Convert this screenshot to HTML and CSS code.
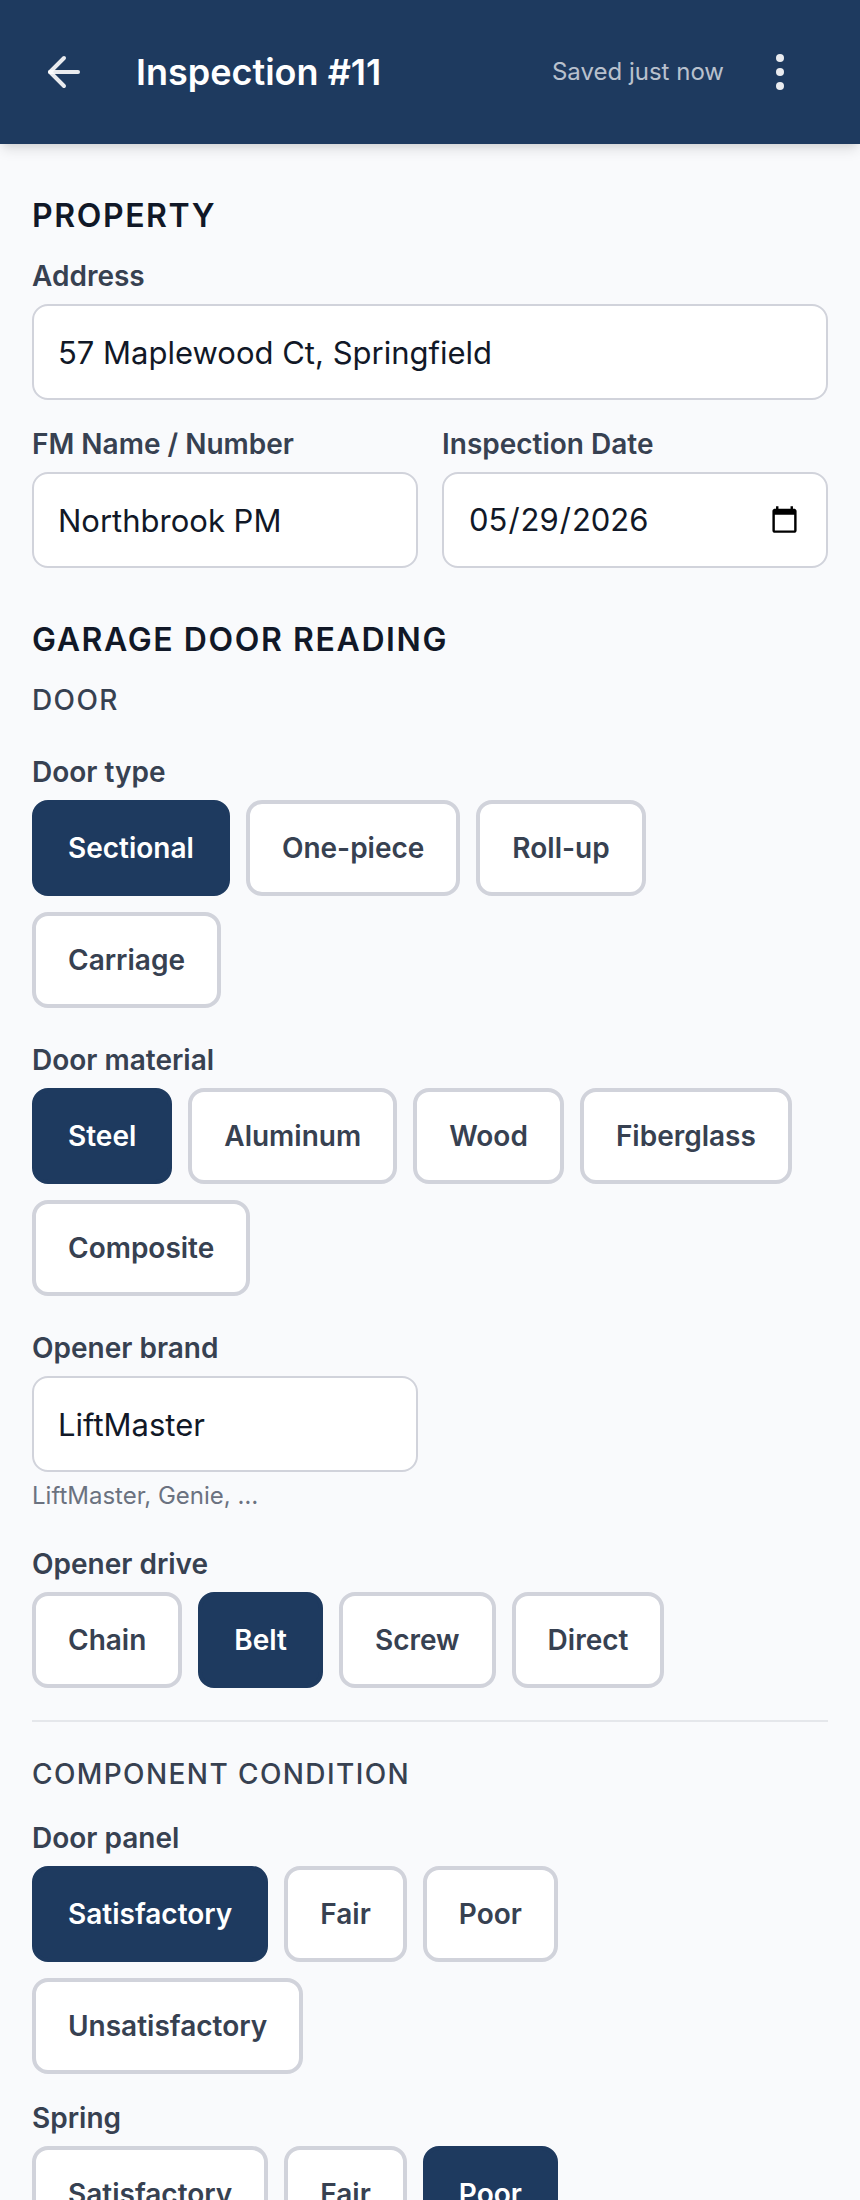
FILE: index.html
```
<!DOCTYPE html>
<html lang="en">
<head>
    <meta charset="utf-8">
    <meta name="viewport" content="width=device-width, initial-scale=1">
    <title>Inspection #11</title>
    <link rel="stylesheet" href="styles.css">
</head>
<body>
    <header class="topbar">
        <button type="button" class="icon-btn" aria-label="Back">
            <svg viewBox="0 0 24 24" fill="none" stroke="currentColor" stroke-width="2" stroke-linecap="round" stroke-linejoin="round">
                <path d="M12 19l-7-7 7-7"/>
                <path d="M19 12H5"/>
            </svg>
        </button>
        <h1>Inspection #11</h1>
        <span class="save-status">Saved just now</span>
        <button type="button" class="icon-btn" aria-label="More options">
            <svg viewBox="0 0 24 24" fill="currentColor">
                <circle cx="12" cy="5" r="2"/>
                <circle cx="12" cy="12" r="2"/>
                <circle cx="12" cy="19" r="2"/>
            </svg>
        </button>
    </header>

    <main>
        <section class="property">
            <h2>Property</h2>
            <div class="fields">
                <div class="field">
                    <label for="address">Address</label>
                    <input type="text" id="address" value="57 Maplewood Ct, Springfield">
                </div>
                <div class="row">
                    <div class="field">
                        <label for="fm-name">FM Name / Number</label>
                        <input type="text" id="fm-name" value="Northbrook PM">
                    </div>
                    <div class="field">
                        <label for="inspection-date">Inspection Date</label>
                        <input type="date" id="inspection-date" value="2026-05-29">
                    </div>
                </div>
            </div>
        </section>

        <section class="reading">
            <h2>Garage Door Reading</h2>

            <div class="door">
                <h3>Door</h3>
                <div class="field" role="group" aria-labelledby="door-type">
                    <span class="label" id="door-type">Door type</span>
                    <div class="pills">
                        <button type="button" class="pill" aria-pressed="true">Sectional</button>
                        <button type="button" class="pill" aria-pressed="false">One-piece</button>
                        <button type="button" class="pill" aria-pressed="false">Roll-up</button>
                        <button type="button" class="pill" aria-pressed="false">Carriage</button>
                    </div>
                </div>
                <div class="field" role="group" aria-labelledby="door-material">
                    <span class="label" id="door-material">Door material</span>
                    <div class="pills">
                        <button type="button" class="pill" aria-pressed="true">Steel</button>
                        <button type="button" class="pill" aria-pressed="false">Aluminum</button>
                        <button type="button" class="pill" aria-pressed="false">Wood</button>
                        <button type="button" class="pill" aria-pressed="false">Fiberglass</button>
                        <button type="button" class="pill" aria-pressed="false">Composite</button>
                    </div>
                </div>
                <div class="row">
                    <div class="field">
                        <label for="opener-brand">Opener brand</label>
                        <input type="text" id="opener-brand" value="LiftMaster" aria-describedby="opener-hint">
                        <p class="hint" id="opener-hint">LiftMaster, Genie, …</p>
                    </div>
                </div>
                <div class="field" role="group" aria-labelledby="opener-drive">
                    <span class="label" id="opener-drive">Opener drive</span>
                    <div class="pills">
                        <button type="button" class="pill" aria-pressed="false">Chain</button>
                        <button type="button" class="pill" aria-pressed="true">Belt</button>
                        <button type="button" class="pill" aria-pressed="false">Screw</button>
                        <button type="button" class="pill" aria-pressed="false">Direct</button>
                    </div>
                </div>
            </div>

            <div class="condition">
                <h3>Component Condition</h3>
                <div class="field" role="group" aria-labelledby="door-panel">
                    <span class="label" id="door-panel">Door panel</span>
                    <div class="pills">
                        <button type="button" class="pill" aria-pressed="true">Satisfactory</button>
                        <button type="button" class="pill" aria-pressed="false">Fair</button>
                        <button type="button" class="pill" aria-pressed="false">Poor</button>
                        <button type="button" class="pill" aria-pressed="false">Unsatisfactory</button>
                    </div>
                </div>
                <div class="field" role="group" aria-labelledby="spring">
                    <span class="label" id="spring">Spring</span>
                    <div class="pills">
                        <button type="button" class="pill" aria-pressed="false">Satisfactory</button>
                        <button type="button" class="pill" aria-pressed="false">Fair</button>
                        <button type="button" class="pill" aria-pressed="true">Poor</button>
                        <button type="button" class="pill" aria-pressed="false">Unsatisfactory</button>
                    </div>
                </div>
            </div>
        </section>
    </main>

    <script>
        // one choice per group
        document.querySelectorAll('.pills').forEach(function(group) {
            group.addEventListener('click', function(e) {
                const pill = e.target.closest('.pill');
                if (!pill) return;
                group.querySelectorAll('.pill').forEach(p => p.setAttribute('aria-pressed', p === pill));
            });
        });
    </script>
</body>
</html>
```
FILE: styles.css
```
* { box-sizing: border-box; margin: 0; }
html { scrollbar-width: none; }
body { font-family: Inter, sans-serif; font-size: 32px; line-height: 48px; color: #111827; background: #f9fafc; }
button, input { font: inherit; color: inherit; }
button { cursor: pointer; }

/* Top bar */
.topbar { position: sticky; top: 0; z-index: 1; display: flex; align-items: center; min-height: 144px; padding: 24px 32px 24px 16px; background: #1e3a5f; color: #fff; box-shadow: 0 8px 12px -2px rgba(0, 0, 0, 0.1), 0 4px 8px -4px rgba(0, 0, 0, 0.1); }
.topbar h1 { flex: 1; margin-left: 24px; font-size: 36px; font-weight: 600; }
.save-status { margin-right: 8px; font-size: 24px; line-height: 32px; color: rgba(255, 255, 255, 0.7); }
.icon-btn { display: flex; align-items: center; justify-content: center; width: 96px; height: 96px; padding: 0; border: 0; background: none; color: rgba(255, 255, 255, 0.9); }
.icon-btn svg { width: 48px; height: 48px; }

/* Sections */
main { display: flex; flex-direction: column; gap: 48px; padding: 48px 32px; }
.property, .reading { display: flex; flex-direction: column; gap: 16px; }
.fields { display: flex; flex-direction: column; gap: 24px; }
.door { display: flex; flex-direction: column; gap: 32px; }
.condition { display: flex; flex-direction: column; gap: 24px; margin-top: 16px; padding-top: 32px; border-top: 2px solid #e5e7eb; }
h2 { font-size: 32px; font-weight: 600; line-height: 48px; letter-spacing: 0.05em; text-transform: uppercase; }
h3 { font-size: 28px; font-weight: 500; line-height: 40px; letter-spacing: 0.05em; text-transform: uppercase; color: #374151; }

/* Fields */
.row { display: grid; grid-template-columns: 1fr 1fr; gap: 24px; }
.field { display: flex; flex-direction: column; gap: 8px; min-width: 0; }
label, .label { font-size: 28px; font-weight: 600; line-height: 40px; color: #374151; }
input { width: 100%; height: 96px; padding: 0 24px; border: 2px solid #d1d3db; border-radius: 16px; background: #fff; font-size: 31px; }
.hint { font-size: 24px; line-height: 32px; color: #6b7280; }

/* Choice pills */
.pills { display: flex; flex-wrap: wrap; gap: 16px; }
.pill { height: 96px; padding: 0 32px; border: 4px solid #d1d3db; border-radius: 16px; background: #fff; font-size: 28px; font-weight: 600; line-height: 40px; color: #374151; }
.pill[aria-pressed="true"] { border-color: #1e3a5f; background: #1e3a5f; color: #fff; }
```
